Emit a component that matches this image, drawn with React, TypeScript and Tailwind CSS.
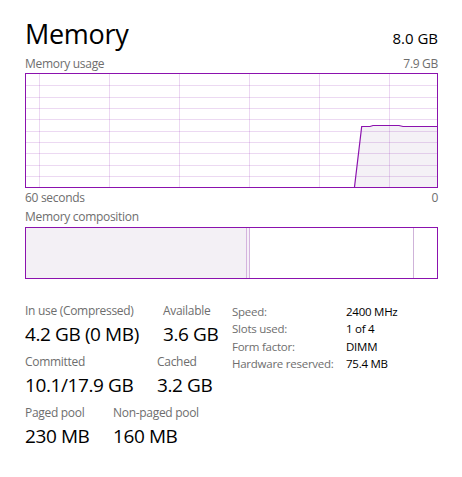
import React from "react";

const FONT = { fontFamily: '"Open Sans", "Noto Sans", sans-serif' };

function UsageChart() {
  const vLines = [13, 83, 153, 223, 293, 363];
  const hLines = [11, 23, 34, 45, 57, 68, 79, 91, 102];
  const pts = "328.5,113 335.7,52.5 344,52.5 347,51.5 373,51.5 377,52.5 411,52.5";
  return (
    <div className="w-[413px] h-[115px] border border-[#8b12ae] bg-white">
      <svg width="411" height="113" viewBox="0 0 411 113" className="block">
        <polygon points={`${pts} 411,113`} fill="#f4f1f6" />
        {vLines.map((x) => (
          <line key={`v${x}`} x1={x + 0.5} y1={0} x2={x + 0.5} y2={113} stroke="#8b12ae" strokeOpacity={0.16} strokeWidth={1} />
        ))}
        {hLines.map((y) => (
          <line key={`h${y}`} x1={0} y1={y + 0.5} x2={411} y2={y + 0.5} stroke="#8b12ae" strokeOpacity={0.16} strokeWidth={1} />
        ))}
        <polyline points={pts} fill="none" stroke="#8b12ae" strokeWidth={1.2} />
      </svg>
    </div>
  );
}

function CompositionBar() {
  return (
    <div className="w-[413px] h-[52px] border border-[#8b12ae] bg-white flex">
      <div className="w-[220px] bg-[#f3f0f5]" />
      <div className="w-[1px] bg-[#d4b4de]" />
      <div className="w-[2px] bg-[#f6f0f8]" />
      <div className="w-[1px] bg-[#d4b4de]" />
      <div className="w-[163px] bg-white" />
      <div className="w-[1px] bg-[#cfb3d9]" />
      <div className="flex-1 bg-white" />
    </div>
  );
}

function Stat({ label, value, w }: { label: string; value: string; w: string }) {
  return (
    <div className={`${w} flex flex-col`}>
      <div className="text-[12px] leading-[16px] text-[#6e6e6e] tracking-[-0.3px] whitespace-nowrap">{label}</div>
      <div className="mt-[3px] text-[19px] leading-[24px] text-black tracking-[-0.4px] whitespace-nowrap">{value}</div>
    </div>
  );
}

export default function App() {
  return (
    <div className="w-[462px] h-[477px] bg-white pl-[25px] pr-[24px] pt-[20px]" style={FONT}>
      <div className="flex justify-between items-baseline">
        <div className="text-[27px] leading-[28px] text-black tracking-[-0.3px]">Memory</div>
        <div className="text-[15px] leading-[20px] text-black">8.0 GB</div>
      </div>
      <div className="mt-[8px] flex justify-between text-[12px] leading-[16px] text-[#6e6e6e] tracking-[-0.3px]">
        <span>Memory usage</span>
        <span>7.9 GB</span>
      </div>
      <div className="mt-[1px]">
        <UsageChart />
      </div>
      <div className="mt-[2px] flex justify-between text-[12px] leading-[16px] text-[#6e6e6e] tracking-[-0.3px]">
        <span>60 seconds</span>
        <span>0</span>
      </div>
      <div className="mt-[3px] text-[12px] leading-[16px] text-[#6e6e6e] tracking-[-0.3px]">Memory composition</div>
      <div className="mt-[2px]">
        <CompositionBar />
      </div>
      <div className="mt-[24px] flex">
        <div className="w-[207px] flex flex-col gap-[8px]">
          <div className="flex">
            <Stat w="w-[138px]" label="In use (Compressed)" value="4.2 GB (0 MB)" />
            <Stat w="w-auto" label="Available" value="3.6 GB" />
          </div>
          <div className="flex">
            <Stat w="w-[132px]" label="Committed" value="10.1/17.9 GB" />
            <Stat w="w-auto" label="Cached" value="3.2 GB" />
          </div>
          <div className="flex">
            <Stat w="w-[88px]" label="Paged pool" value="230 MB" />
            <Stat w="w-auto" label="Non-paged pool" value="160 MB" />
          </div>
        </div>
        <div className="grid grid-cols-[114px_auto] text-[11.5px] leading-[17.4px] tracking-[-0.25px] h-fit">
          <span className="text-[#6e6e6e]">Speed:</span>
          <span className="text-black">2400 MHz</span>
          <span className="text-[#6e6e6e]">Slots used:</span>
          <span className="text-black">1 of 4</span>
          <span className="text-[#6e6e6e]">Form factor:</span>
          <span className="text-black">DIMM</span>
          <span className="text-[#6e6e6e]">Hardware reserved:</span>
          <span className="text-black">75.4 MB</span>
        </div>
      </div>
    </div>
  );
}
